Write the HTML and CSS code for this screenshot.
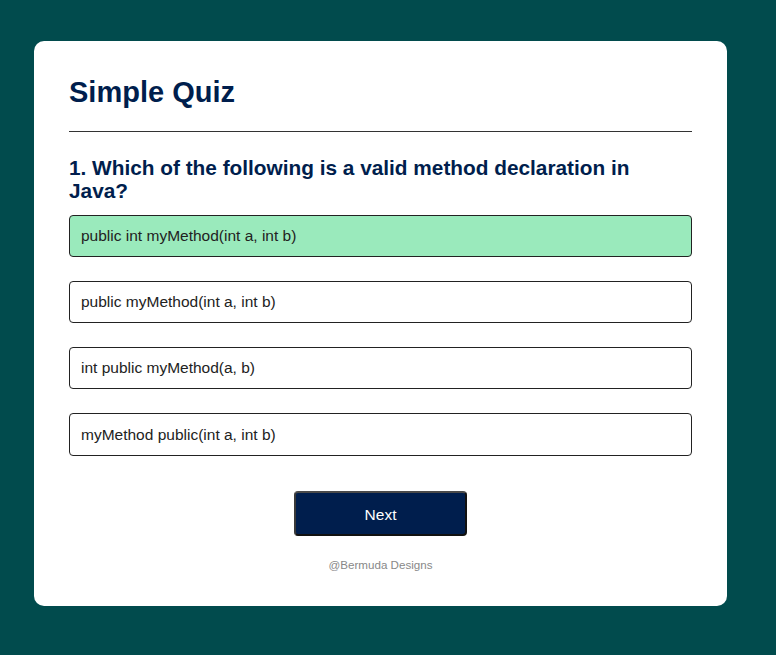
FILE: index.html
```html
<!DOCTYPE html>
<html>
<head>
<meta charset="utf-8">
<link rel="stylesheet" href="styles.css">
</head>
<body>
<div class="app">
  <h1 class="title">Simple Quiz</h1>
  <div class="quiz">
    <h2 class="question">1. Which of the following is a valid method declaration in Java?</h2>
    <div class="answers">
      <button class="btn correct">public int myMethod(int a, int b)</button>
      <button class="btn">public myMethod(int a, int b)</button>
      <button class="btn">int public myMethod(a, b)</button>
      <button class="btn">myMethod public(int a, int b)</button>
    </div>
    <button class="next-btn">Next</button>
  </div>
  <p class="credit">@Bermuda Designs</p>
</div>
</body>
</html>
```

FILE: styles.css
```css
html, body {
  margin: 0;
  padding: 0;
}
body {
  background: #014b4d;
  font-family: "Liberation Sans", Arial, sans-serif;
  height: 655px;
  overflow: hidden;
}
.app {
  width: 693px;
  box-sizing: border-box;
  margin: 41px 0 0 34px;
  background: #fff;
  border-radius: 10px;
  padding: 34px 35px 34px;
}
.title {
  margin: 0;
  font-size: 29px;
  line-height: 34px;
  font-weight: 700;
  color: #001e4d;
  padding-bottom: 22px;
  border-bottom: 1px solid #333;
}
.quiz {
  display: flex;
  flex-direction: column;
}
.question {
  margin: 24px 0 0;
  font-size: 20.8px;
  line-height: 23px;
  font-weight: 700;
  color: #001e4d;
  padding-right: 50px;
}
.answers {
  display: flex;
  flex-direction: column;
  gap: 24px;
  margin-top: 13px;
}
.btn {
  display: block;
  width: 100%;
  height: 42px;
  box-sizing: border-box;
  background: #fff;
  color: #222;
  border: 1px solid #222;
  border-radius: 4px;
  padding: 0 11px;
  text-align: left;
  font-family: "Liberation Sans", Arial, sans-serif;
  font-size: 15.5px;
}
.btn:last-child {
  height: 43px;
}
.btn.correct {
  background: #9aeabc;
}
.next-btn {
  align-self: center;
  width: 173px;
  height: 45px;
  margin-top: 35px;
  padding: 2px 0 0;
  background: #001e4d;
  color: #fff;
  border: 2px solid #111;
  border-top-color: #4a4a4a;
  border-left-color: #3a3a3a;
  border-radius: 4px;
  font-family: "Liberation Sans", Arial, sans-serif;
  font-size: 15.5px;
}
.credit {
  margin: 22px 0 0;
  text-align: center;
  font-size: 11.6px;
  line-height: 14px;
  color: #888;
}
```
